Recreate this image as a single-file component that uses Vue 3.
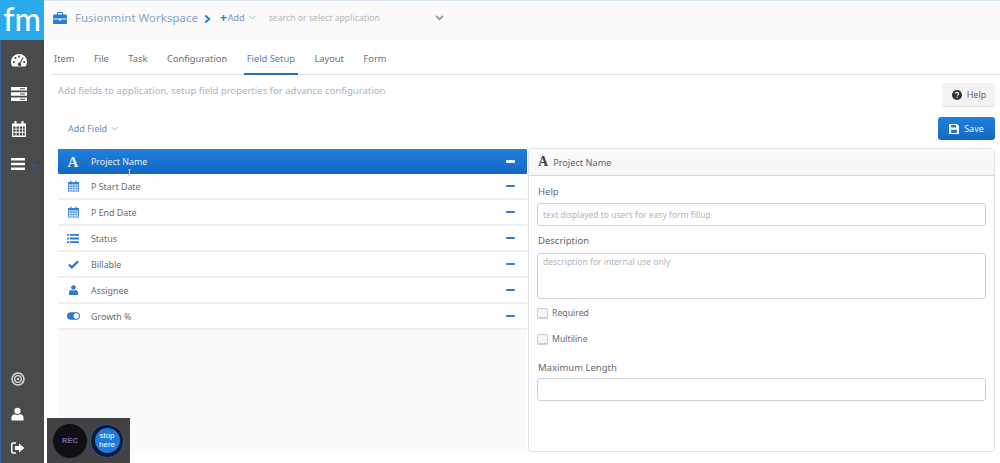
<script setup>
const tabs = ['Item', 'File', 'Task', 'Configuration', 'Field Setup', 'Layout', 'Form']
const fields = [
  { name: 'Project Name', icon: 'font', active: true },
  { name: 'P Start Date', icon: 'cal' },
  { name: 'P End Date', icon: 'cal' },
  { name: 'Status', icon: 'list' },
  { name: 'Billable', icon: 'check' },
  { name: 'Assignee', icon: 'user' },
  { name: 'Growth %', icon: 'toggle' }
]
</script>

<template>
  <div class="app">
    <aside class="side">
      <div class="logo">fm</div>
      <nav class="nav">
        <svg class="ni" viewBox="0 0 16 14" width="16" height="14"><path fill="#fff" d="M8 1a8 8 0 0 0-8 8c0 1.700.5 3.200 1.400 4.500h13.200A8 8 0 0 0 16 9a8 8 0 0 0-8-8Z"/><g fill="#4a4a4c"><circle cx="2.800" cy="9" r="1.100"/><circle cx="4.500" cy="5" r="1.100"/><circle cx="8" cy="3.500" r="1.100"/><circle cx="13.200" cy="9" r="1.100"/><path d="m11.800 4.300.9.500-3 5.200a1.800 1.800 0 1 1-1-.4Z"/></g></svg>
        <svg class="ni" viewBox="0 0 16 14" width="16" height="14"><path fill="#fff" d="M0 0h16v3.600H0zM0 5.200h16v3.600H0zM0 10.400h16V14H0z"/><path fill="#4a4a4c" d="M9 1.200h5v1H9zM9 6.500h5v1H9zM9 11.700h5v1H9z"/></svg>
        <svg class="ni" viewBox="0 0 14 16" width="14" height="16"><path fill="#fff" d="M0 2.500h2.500V0h2v2.500h5V0h2v2.500H14V16H0z"/><path fill="#4a4a4c" d="M1.200 5.500h2.400v2.200H1.200zM4.500 5.500h2.400v2.200H4.500zM7.800 5.500h2.400v2.200H7.800zM11 5.500h1.800v2.200H11zM1.200 8.600h2.400v2.200H1.200zM4.500 8.600h2.400v2.200H4.500zM7.800 8.600h2.400v2.200H7.800zM11 8.600h1.800v2.200H11zM1.200 11.700h2.400v2.800H1.200zM4.500 11.700h2.400v2.800H4.500zM7.800 11.700h2.400v2.800H7.800zM11 11.700h1.800v2.800H11z"/></svg>
        <div class="menu-row">
          <svg viewBox="0 0 14 12" width="14" height="12"><path fill="#fff" d="M0 0h14v2.400H0zM0 4.800h14v2.400H0zM0 9.600h14V12H0z"/></svg>
          <svg class="mc" viewBox="0 0 8 5" width="8" height="5"><path d="m1 1 3 3 3-3" fill="none" stroke="#2d5f9e" stroke-width="1.200"/></svg>
        </div>
      </nav>
      <div class="nav-bottom">
        <svg viewBox="0 0 14 14" width="14" height="14"><circle cx="7" cy="7" r="6" fill="none" stroke="#ddd" stroke-width="1.500"/><circle cx="7" cy="7" r="3.300" fill="none" stroke="#ddd" stroke-width="1.300"/><circle cx="7" cy="7" r="1.200" fill="#ddd"/></svg>
        <svg viewBox="0 0 14 14" width="13" height="14"><circle cx="7" cy="3.600" r="3.400" fill="#fff"/><path fill="#fff" d="M.5 14v-3c0-2.300 1.800-3.600 3.500-3.800 1.700 1 4.300 1 6 0 1.700.2 3.500 1.500 3.500 3.800v3z"/></svg>
        <svg viewBox="0 0 14 12" width="14" height="12"><path fill="none" stroke="#fff" stroke-width="1.500" d="M5 1H2a1.200 1.200 0 0 0-1.200 1.200v7.600A1.200 1.200 0 0 0 2 11h3"/><path fill="#fff" d="M8 1.500 13.500 6 8 10.500V8H4V4h4z"/></svg>
      </div>
    </aside>

    <main class="main">
      <header class="top">
        <svg viewBox="0 0 14 12" width="14" height="12"><path fill="#2a7bd0" d="M5 0h4c.6 0 1 .4 1 1v1.500h2.500c.8 0 1.500.7 1.500 1.500v2.600H0V4c0-.8.700-1.500 1.500-1.500H4V1c0-.6.400-1 1-1Zm0 1v1.500h4V1ZM0 7.400h6v1h2v-1h6V11c0 .6-.4 1-1 1H1c-.6 0-1-.4-1-1Z"/></svg>
        <span class="ws">Fusionmint Workspace</span>
        <svg class="crumb" viewBox="0 0 8 10" width="7" height="10"><path d="M1.500 1 6 5l-4.500 4" fill="none" stroke="#2a7bd0" stroke-width="2.200"/></svg>
        <span class="add"><b>+</b>Add
          <svg viewBox="0 0 8 5" width="7" height="5"><path d="m1 1 3 3 3-3" fill="none" stroke="#7fa6d6" stroke-width="1"/></svg>
        </span>
        <span class="search">search or select application</span>
        <svg viewBox="0 0 10 7" width="9" height="6"><path d="m1 1 4 4 4-4" fill="none" stroke="#8b8f94" stroke-width="1.800"/></svg>
      </header>

      <div class="tabs">
        <span v-for="t in tabs" :key="t" class="tab" :class="{ on: t === 'Field Setup' }">{{ t }}</span>
      </div>

      <div class="content">
        <div class="hint-row">
          <p class="hint">Add fields to application, setup field properties for advance configuration</p>
          <button class="help-btn">
            <svg viewBox="0 0 12 12" width="10" height="10"><circle cx="6" cy="6" r="6" fill="#2f3338"/><path d="M4 4.600C4 3.400 5 2.800 6 2.800s2 .6 2 1.700c0 1.400-1.600 1.300-1.600 2.500" fill="none" stroke="#fff" stroke-width="1.300"/><path fill="#fff" d="M5.500 8h1.500v1.400H5.500z"/></svg>
            Help
          </button>
        </div>
        <div class="action-row">
          <span class="add-field">Add Field
            <svg viewBox="0 0 8 5" width="7" height="5"><path d="m1 1 3 3 3-3" fill="none" stroke="#7fa6d6" stroke-width="1"/></svg>
          </span>
          <button class="save-btn">
            <svg viewBox="0 0 12 12" width="10" height="10"><path fill="#fff" d="M1 0h8.500L12 2.500V11a1 1 0 0 1-1 1H1a1 1 0 0 1-1-1V1a1 1 0 0 1 1-1Z"/><path fill="#1a75d2" d="M2.500 1.300h6v3h-6zM2.500 7h7v3.700h-7z"/></svg>
            Save
          </button>
        </div>

        <div class="split">
          <div class="list">
            <div v-for="f in fields" :key="f.name" class="row" :class="{ active: f.active }">
              <span class="ic">
                <span v-if="f.icon === 'font'" class="glyph-a">A</span>
                <svg v-else-if="f.icon === 'cal'" viewBox="0 0 14 14" width="11" height="12"><path fill="#3583d6" d="M0 2h3V0h1.500v2h5V0H11v2h3v12H0z"/><path fill="#dcebf9" d="M1 4.800h2.500v2H1zM4.200 4.800h2.500v2H4.200zM7.400 4.800h2.500v2H7.400zM10.600 4.800H13v2h-2.400zM1 7.600h2.500v2.200H1zM4.200 7.600h2.500v2.200H4.200zM7.400 7.600h2.500v2.200H7.400zM10.600 7.600H13v2.200h-2.400zM1 10.600h2.500V13H1zM4.200 10.600h2.500V13H4.200zM7.400 10.600h2.500V13H7.400zM10.600 10.600H13V13h-2.400z"/></svg>
                <svg v-else-if="f.icon === 'list'" viewBox="0 0 12 9" width="12" height="9"><path fill="#2a7bd0" d="M0 0h1.800v1.800H0zM2.800 0H12v1.800H2.800zM0 3.600h1.800v1.800H0zM2.800 3.600H12v1.800H2.800zM0 7.200h1.800V9H0zM2.800 7.200H12V9H2.800z"/></svg>
                <svg v-else-if="f.icon === 'check'" viewBox="0 0 12 9" width="11" height="9"><path fill="none" stroke="#2a7bd0" stroke-width="2.600" d="m1 4.500 3.200 3L11 1.200"/></svg>
                <svg v-else-if="f.icon === 'user'" viewBox="0 0 10 11" width="9" height="10"><circle cx="5" cy="2.700" r="2.600" fill="#2a7bd0"/><path fill="#2a7bd0" d="M0 11V8.300c0-1.800 1.300-2.700 2.600-2.800 1.400.8 3.400.8 4.800 0C8.700 5.600 10 6.500 10 8.300V11z"/></svg>
                <svg v-else viewBox="0 0 14 8" width="13" height="8"><rect width="14" height="8" rx="4" fill="#2a7bd0"/><circle cx="10" cy="4" r="2.900" fill="#fff"/></svg>
              </span>
              <span class="label">{{ f.name }}</span>
              <span class="minus"></span>
            </div>
            <span class="cursor">I</span>
          </div>

          <section class="panel">
            <div class="panel-head"><span class="glyph-b">A</span> Project Name</div>
            <div class="panel-body">
              <label class="lbl">Help</label>
              <div class="input ph">text displayed to users for easy form fillup</div>
              <label class="lbl l2">Description</label>
              <div class="input area ph">description for internal use only</div>
              <div class="check first"><span class="box"></span>Required</div>
              <div class="check"><span class="box"></span>Multiline</div>
              <label class="lbl l3">Maximum Length</label>
              <div class="input"></div>
            </div>
          </section>
        </div>
      </div>
    </main>

    <div class="rec">
      <span class="rec-a">REC</span>
      <span class="rec-b"><span>stop<br>here</span></span>
    </div>
  </div>
</template>

<style scoped>
.app { position: relative; display: flex; width: 1000px; height: 463px; overflow: hidden; background: #fff; font-family: "Noto Sans", "Open Sans", sans-serif; font-size: 9px; color: #5c6066; }
.side { width: 44px; flex: none; display: flex; flex-direction: column; background: #4a4a4c; border-left: 1px solid #3a64a8; box-sizing: border-box; }
.logo { height: 40px; margin-left: -1px; background: #2aaaea; color: #fff; font-family: "Lato", sans-serif; font-size: 32px; font-weight: 500; line-height: 37px; text-align: center; letter-spacing: 0; white-space: nowrap; }
.nav { display: flex; flex-direction: column; align-items: flex-start; padding: 13px 0 0 10px; gap: 20px; }
.ni { display: block; }
.nav > :nth-child(3) { margin-left: 1px; }
.menu-row { display: flex; align-items: center; gap: 6px; margin-top: 1px; }
.menu-row .mc { margin-top: 2px; }
.nav-bottom { margin-top: auto; display: flex; flex-direction: column; align-items: flex-start; padding: 0 0 9px 10px; gap: 21px; }

.main { flex: 1; min-width: 0; display: flex; flex-direction: column; }
.top { height: 40px; flex: none; box-sizing: border-box; display: flex; align-items: center; padding: 0 0 6px 9px; background: #fafafa; border-top: 1px solid #dce8f6; }
.ws { margin-left: 8px; font-size: 11.500px; color: #8aa3c4; }
.crumb { margin-left: 6px; margin-top: 2px; }
.add { margin-left: 9px; color: #6f97cc; font-size: 9px; display: inline-flex; align-items: center; gap: 1px; }
.add b { color: #2a7bd0; font-size: 12px; line-height: 10px; font-weight: 700; }
.add svg { margin-left: 3px; }
.search { margin-left: 13px; width: 166px; color: #b4b7bb; font-size: 8.700px; }

.tabs { height: 35px; flex: none; box-sizing: border-box; display: flex; margin-left: 7px; padding-left: 0; border-bottom: 1px solid #dfe1e4; }
.tab { padding: 0 3px; margin-right: 13.500px; line-height: 38px; height: 34px; color: #6b6f74; font-size: 9.300px; box-sizing: border-box; }
.tab.on { color: #4f82c4; border-bottom: 2px solid #2a6fbe; height: 35px; }

.content { flex: 1; min-height: 0; display: flex; flex-direction: column; padding: 0 5px 11px 14px; }
.hint-row { height: 42px; flex: none; display: flex; justify-content: space-between; align-items: flex-start; }
.hint { margin: 9px 0 0; color: #a6b4c8; font-size: 9.550px; }
.help-btn { margin-top: 8px; width: 52px; height: 23px; border: 0; border-radius: 3px; background: #f3f3f3; box-shadow: 0 1px 1px #ddd; display: flex; align-items: center; justify-content: center; gap: 5px; font: inherit; color: #666; }
.action-row { height: 32px; flex: none; display: flex; justify-content: space-between; align-items: flex-start; }
.add-field { margin: 5px 0 0 10px; color: #5f8fcc; font-size: 9px; display: inline-flex; align-items: center; gap: 4px; }
.save-btn { width: 57px; height: 23px; border: 0; border-radius: 3px; background: linear-gradient(#1f80dd, #1269c4); color: #eaf3fc; display: flex; align-items: center; justify-content: center; gap: 5px; font: inherit; }

.split { flex: 1; min-height: 0; display: flex; gap: 1px; }
.list { position: relative; width: 469px; flex: none; background: #fafafa; }
.row { height: 26px; box-sizing: border-box; display: flex; align-items: center; background: #fff; border-bottom: 2px solid #efefef; color: #6a6d72; padding-right: 12px; font-size: 8.900px; }
.row.active { height: 25px; background: linear-gradient(#207fdc, #1268c3); color: #e6f1fb; border-bottom: 0; border-radius: 1px; }
.ic { width: 30px; margin-right: 3px; display: flex; justify-content: center; }
.label { flex: 1; }
.glyph-a { font-family: "Liberation Serif", serif; font-weight: 700; font-size: 15px; color: #e6f1fb; line-height: 12px; }
.minus { width: 9px; height: 2.500px; border-radius: 1px; background: #2a7bd0; }
.active .minus { background: #f2f7fd; }
.cursor { position: absolute; left: 70px; top: 20px; font-size: 8px; line-height: 8px; color: #fff; text-shadow: 0 0 1px #333; }

.panel { flex: 1; display: flex; flex-direction: column; box-sizing: border-box; border: 1px solid #e3e3e5; border-radius: 3px; background: #fff; margin-top: -1px; }
.panel-head { height: 27px; flex: none; box-sizing: border-box; display: flex; align-items: center; gap: 5px; padding-left: 9px; background: linear-gradient(#fbfbfc, #f5f5f6); border-bottom: 1px solid #d5d6d8; color: #5f6368; font-size: 9.200px; }
.glyph-b { font-family: "Liberation Serif", serif; font-weight: 700; font-size: 14px; color: #3c3f43; line-height: 12px; }
.panel-body { padding: 9px 8px 0 8px; display: flex; flex-direction: column; align-items: stretch; }
.lbl { height: 18px; line-height: 14px; padding-left: 1px; color: #65686d; font-size: 9.500px; }
.l2 { margin-top: 8px; height: 19px; }
.l3 { margin-top: 9px; height: 17px; }
.input { height: 23px; box-sizing: border-box; border: 1px solid #cfd0d2; border-radius: 3px; padding-left: 5px; line-height: 21px; font-size: 8.500px; }
.ph { color: #b3b5b8; }
.area { height: 46px; line-height: 16px; }
.check { height: 26px; display: flex; align-items: center; gap: 4px; color: #6a6d72; font-size: 8.700px; }
.check.first { margin-top: 1px; }
.box { width: 11px; height: 10px; box-sizing: border-box; border: 1px solid #cfd0d2; border-radius: 2px; background: #f6f6f6; box-shadow: 0 1px 1px #ccc; }

.rec { position: absolute; left: 47px; top: 418px; width: 83px; height: 45px; box-sizing: border-box; background: #424244; display: flex; align-items: center; gap: 3px; padding-left: 6px; }
.rec-a { width: 34px; height: 34px; border-radius: 50%; background: #101014; color: #7a68a3; font: 700 7.500px/34px "Liberation Sans", sans-serif; text-align: center; }
.rec-b { width: 34px; height: 34px; box-sizing: border-box; border-radius: 50%; background: #101a2e; border: 1px solid #2c5aa0; padding: 3.500px; display: block; }
.rec-b span { display: block; width: 25px; height: 25px; border-radius: 50%; background: #1c7ae0; color: #fff; font: 8px/9px "Liberation Sans", sans-serif; text-align: center; padding-top: 3px; box-sizing: border-box; }
</style>
